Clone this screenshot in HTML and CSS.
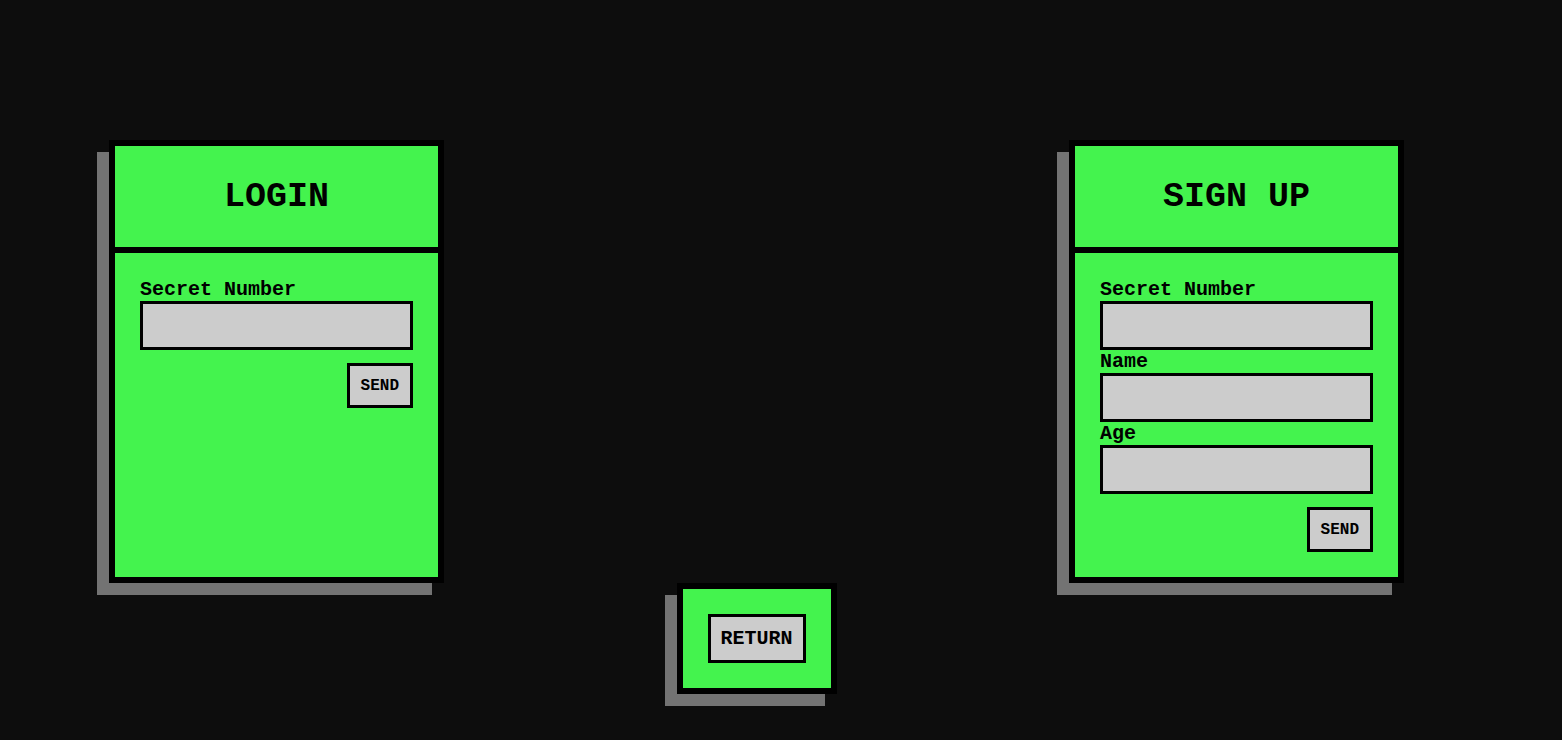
FILE: index.html
```html
<!DOCTYPE html>
<html lang="en">
<head>
<meta charset="utf-8">
<meta name="viewport" content="width=device-width, initial-scale=1">
<title>Login</title>
<link rel="stylesheet" href="styles.css">
</head>
<body>
<main class="access">
  <section class="card">
    <h1 class="card-title">LOGIN</h1>
    <form class="card-form">
      <label class="label" for="login-number">Secret Number</label>
      <input class="field" id="login-number" type="text">
      <button class="button button-send" type="submit">SEND</button>
    </form>
  </section>
  <section class="card card-signup">
    <h1 class="card-title">SIGN UP</h1>
    <form class="card-form">
      <label class="label" for="signup-number">Secret Number</label>
      <input class="field" id="signup-number" type="text">
      <label class="label" for="signup-name">Name</label>
      <input class="field" id="signup-name" type="text">
      <label class="label" for="signup-age">Age</label>
      <input class="field" id="signup-age" type="text">
      <button class="button button-send" type="submit">SEND</button>
    </form>
  </section>
  <div class="card card-return">
    <button class="button" type="button">RETURN</button>
  </div>
</main>
</body>
</html>
```

FILE: styles.css
```css
* {
  box-sizing: border-box;
}

body {
  margin: 0;
  background: #0d0d0d;
  color: #000;
  font-family: "Courier New", "Liberation Mono", monospace;
  font-size: 20px;
  font-weight: bold;
}

.access {
  display: grid;
  grid-template-columns: repeat(3, auto);
  justify-content: space-between;
  padding: 140px 158px 46px 109px;
}

.card {
  display: flex;
  flex-direction: column;
  background: #44f34e;
  border: 6px solid #000;
  box-shadow: -12px 12px 0 #737373;
}

.card-signup {
  grid-column: 3;
}

.card-return {
  grid-column: 2;
  grid-row: 2;
  width: 160px;
  padding: 25px;
}

.card-title {
  margin: 0;
  padding: 31px 25px 29px;
  border-bottom: 6px solid #000;
  font-size: 35px;
  line-height: 41px;
  text-align: center;
}

.card-form {
  display: flex;
  flex-direction: column;
  padding: 25px;
}

.label {
  line-height: 23px;
}

.field,
.button {
  height: 49px;
  border: 3px solid #000;
  border-radius: 0;
  background: #ccc;
  color: #000;
  font: inherit;
  padding: 10px;
}

.field {
  width: 273px;
  max-width: 100%;
}

.button-send {
  align-self: flex-end;
  height: 45px;
  margin-top: 13px;
  padding: 10px 11px;
  font-size: 16px;
}
```
